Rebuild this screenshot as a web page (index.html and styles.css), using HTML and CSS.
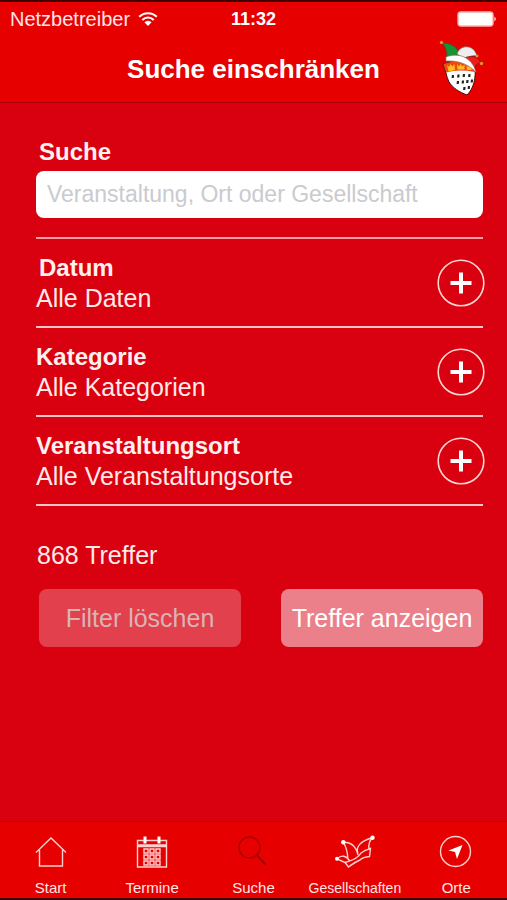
FILE: index.html
```html
<!DOCTYPE html>
<html lang="de">
<head>
<meta charset="utf-8">
<meta name="viewport" content="width=device-width, initial-scale=1">
<title>Suche einschränken</title>
<link rel="stylesheet" href="styles.css">
</head>
<body>
<div class="app">
  <header class="top">
    <div class="status">
      <div class="carrier">
        <span>Netzbetreiber</span>
        <svg class="wifi" viewBox="0 0 20 16" aria-hidden="true">
          <path d="M1.2 5.8a12.4 12.4 0 0 1 17.6 0M4.3 9a8 8 0 0 1 11.4 0" fill="none" stroke="#fff" stroke-width="2"/>
          <path d="M10 15 6.4 11.3a5 5 0 0 1 7.2 0z" fill="#fff"/>
        </svg>
      </div>
      <time class="clock">11:32</time>
      <svg class="battery" viewBox="0 0 40 16" aria-hidden="true">
        <rect x="1" y="1" width="35" height="14" rx="3" fill="#fff" stroke="#ffb3b3" stroke-width="1.4"/>
        <path d="M37.5 5.5q2.500 2.500 0 5z" fill="#fff"/>
      </svg>
    </div>
    <div class="titlebar">
      <h1 class="title">Suche einschränken</h1>
      <svg class="logo" viewBox="0 0 50 62" aria-hidden="true">
        <path d="M5 26c3 6 3 12 6 18 4 6 10 10 18 13 7-7 9-17 8-29Q22 20 5 26z" fill="#fff" stroke="#4a1010" stroke-width="1"/>
        <path d="M5.500 26Q22 20 37 27v7Q20 31 8.500 34.500 7 30 5.500 26z" fill="#ee4a0c"/>
        <path d="m9 27 2 2 1.500-3 2 2.500 2-2.500.500 6-6.500 1.500zM19 26l2 2.500 1.500-2.500 2 2.500 2-2v5h-7zM28.500 27l1.500 2 2-1.500 1.500 2.500v2h-4.500z" fill="#ffbd22"/>
        <path d="M4 5c9 0 16 4 18 13-5-2-9-1-13 2C9 13 8 9 4 5z" fill="#159437" stroke="#3e5a2a" stroke-width=".8"/>
        <path d="M19 16C22 6 36 6 39 18c-4-1-8 0-11 4z" fill="#eee" stroke="#765" stroke-width=".7"/>
        <path d="M26 20c7-3 14-2 17 5-4 0-6 2-6 7z" fill="#ed1c1c" stroke="#74191a" stroke-width=".7"/>
        <path d="M8 19C20 14 34 19 38 34 29 25 19 22.500 8 23z" fill="#fff" stroke="#987070" stroke-width=".7"/>
        <g fill="#d9962b"><circle cx="3.500" cy="4.500" r="1.700"/><circle cx="39" cy="18" r="1.500"/><circle cx="43.500" cy="25.500" r="1.700"/></g>
        <path d="m15 37-.3 3M20.500 36.500l-.3 3M26 36l-.3 3M31.500 36l-.3 3M20 43l-.3 3M25 42.500l-.3 3M29.500 42l-.3 3M34 41.500l-.3 3M26.500 49l-.3 3M31 48l-.3 3" stroke="#222" stroke-width="2.200"/>
      </svg>
    </div>
  </header>

  <main class="content">
    <form class="filters">
      <label class="heading inset" for="query">Suche</label>
      <input class="query" id="query" type="text" placeholder="Veranstaltung, Ort oder Gesellschaft">
      <div class="rows">
        <section class="row">
          <div><h2 class="heading inset">Datum</h2><p class="value">Alle Daten</p></div>
          <button class="add" type="button" aria-label="Datum wählen"><svg viewBox="0 0 48 48" aria-hidden="true"><circle cx="24" cy="24" r="22.800"/><path d="M24 13.500v21M13.500 24h21"/></svg></button>
        </section>
        <section class="row">
          <div><h2 class="heading">Kategorie</h2><p class="value">Alle Kategorien</p></div>
          <button class="add" type="button" aria-label="Kategorie wählen"><svg viewBox="0 0 48 48" aria-hidden="true"><circle cx="24" cy="24" r="22.800"/><path d="M24 13.500v21M13.500 24h21"/></svg></button>
        </section>
        <section class="row">
          <div><h2 class="heading">Veranstaltungsort</h2><p class="value">Alle Veranstaltungsorte</p></div>
          <button class="add" type="button" aria-label="Veranstaltungsort wählen"><svg viewBox="0 0 48 48" aria-hidden="true"><circle cx="24" cy="24" r="22.800"/><path d="M24 13.500v21M13.500 24h21"/></svg></button>
        </section>
      </div>
      <p class="hits">868 Treffer</p>
      <div class="actions">
        <button class="action muted" type="button">Filter löschen</button>
        <button class="action" type="button">Treffer anzeigen</button>
      </div>
    </form>
  </main>

  <nav class="tabs">
    <a class="tab" href="#start">
      <svg viewBox="0 0 36 36" aria-hidden="true"><path d="M3 18.500 18 4l15 14.500M6.500 16v16h23V16"/></svg>
      <span>Start</span>
    </a>
    <a class="tab" href="#termine">
      <svg viewBox="0 0 36 36" aria-hidden="true"><path d="M3.500 6.500h29v4.500h-29zM3.500 12.500h29v20.500h-29z"/><path d="M11 2.500v7M25 2.500v7" stroke="#fff" stroke-width="3"/><path d="M10 15h4v4h-4zM16 15h4v4h-4zM22 15h4v4h-4zM10 21h4v4h-4zM16 21h4v4h-4zM22 21h4v4h-4zM10 27h4v4h-4zM16 27h4v4h-4zM22 27h4v4h-4z"/></svg>
      <span>Termine</span>
    </a>
    <a class="tab current" href="#suche" aria-current="page">
      <svg viewBox="0 0 36 36" aria-hidden="true"><circle cx="14.500" cy="13.500" r="10.500"/><path d="m22 21.500 8.500 9" stroke-width="2"/></svg>
      <span>Suche</span>
    </a>
    <a class="tab" href="#gesellschaften">
      <svg class="wide" viewBox="0 0 42 36" aria-hidden="true"><path d="M11 28.500Q24 25 27 19q4-3 9.500-4.500L35.500 22.500Q29 23 26 26q-5 2-11.500 7zM3 24.800q7-6 12.500 1.700M3 24.800l8 3.700M9.300 8.300q4 6 4.500 16M9.300 8.300Q21 8 24 21M24 20Q20 9 38.700 3.500 34 8 35 15"/><g fill="#fff" stroke="none"><circle cx="3" cy="24.700" r="2"/><circle cx="9.300" cy="8.300" r="2.200"/><circle cx="38.500" cy="3.700" r="2.200"/></g></svg>
      <span class="long">Gesellschaften</span>
    </a>
    <a class="tab" href="#orte">
      <svg viewBox="0 0 36 36" aria-hidden="true"><circle cx="17.500" cy="17.500" r="15"/><path d="M24.500 11 19 25l-2-7-6.500-1.500z" fill="#fff" stroke="none"/></svg>
      <span>Orte</span>
    </a>
  </nav>
</div>
</body>
</html>
```
FILE: styles.css
```css
* {
  box-sizing: border-box;
}

body {
  margin: 0;
  background: #d9000f;
  color: #fff;
  font-family: "Liberation Sans", Arial, sans-serif;
}

h1,
h2,
p {
  margin: 0;
}

.app {
  display: flex;
  flex-direction: column;
  min-height: 100vh;
  border-top: 2px solid #400000;
  border-bottom: 2px solid #400000;
}

.top {
  background: #e60000;
  border-bottom: 1px solid #b00008;
}

.status {
  display: grid;
  grid-template-columns: 1fr auto 1fr;
  align-items: center;
  height: 34px;
  padding: 0 10px;
}

.carrier {
  display: flex;
  align-items: center;
  gap: 8px;
  font-size: 20px;
  line-height: 24px;
  color: #ffe5e5;
}

.wifi {
  width: 20px;
  height: 16px;
}

.clock {
  font-size: 18px;
  font-weight: bold;
}

.battery {
  width: 40px;
  height: 16px;
  justify-self: end;
}

.titlebar {
  display: grid;
  grid-template-columns: 1fr auto 1fr;
  align-items: center;
  height: 66px;
  padding: 0 19px;
}

.title {
  grid-column: 2;
  font-size: 26px;
  line-height: 32px;
}

.logo {
  width: 50px;
  height: 62px;
  justify-self: end;
}

.content {
  flex: 1;
  padding: 34px 24px 24px 36px;
}

.heading {
  display: block;
  font-size: 24px;
  font-weight: bold;
  line-height: 30px;
  color: #fff0f0;
}

.inset {
  padding-left: 3px;
}

.query {
  display: block;
  width: 100%;
  height: 47px;
  margin: 4px 0 19px;
  padding: 0 11px;
  border: 0;
  border-radius: 8px;
  background: #fff;
  color: #333;
  font: 23px "Liberation Sans", Arial, sans-serif;
}

.query::placeholder {
  color: #cacacf;
  opacity: 1;
}

.rows {
  border-top: 2px solid #ff9da2;
}

.row {
  display: flex;
  align-items: center;
  justify-content: space-between;
  height: 89px;
  border-bottom: 2px solid #ffc4c7;
}

.value,
.hits {
  font-size: 25px;
  line-height: 30px;
  color: #ffe9e9;
}

.add {
  width: 48px;
  height: 48px;
  margin-right: -2px;
  padding: 0;
  border: 0;
  background: none;
}

.add svg {
  display: block;
  fill: none;
  stroke: #ffd5d5;
  stroke-width: 1.6;
}

.add path {
  stroke: #fff;
  stroke-width: 4;
}

.hits {
  margin-top: 34px;
  padding-left: 1px;
}

.actions {
  display: grid;
  grid-template-columns: 1fr 1fr;
  gap: 40px;
  margin-top: 19px;
  padding-left: 3px;
}

.action {
  height: 58px;
  padding: 0;
  border: 0;
  border-radius: 8px;
  background: #ec808a;
  color: #fff;
  font: 25px "Liberation Sans", Arial, sans-serif;
  white-space: nowrap;
}

.muted {
  background: #e3404d;
  color: #d8b4b4;
}

.tabs {
  display: grid;
  grid-template-columns: repeat(5, 1fr);
  height: 77px;
  border-top: 1px solid #b80006;
  background: #e60000;
}

.tab {
  display: flex;
  flex-direction: column;
  align-items: center;
  gap: 9px;
  min-width: 0;
  padding-top: 12px;
  color: #ffe5e5;
  font-size: 15px;
  line-height: 18px;
  text-decoration: none;
}

.tab svg {
  width: 36px;
  height: 36px;
  fill: none;
  stroke: #ffd0d0;
  stroke-width: 1.4;
}

.tab .wide {
  width: 42px;
}

.tab.current svg {
  stroke: #a80000;
}

.long {
  font-size: 14px;
}
```
